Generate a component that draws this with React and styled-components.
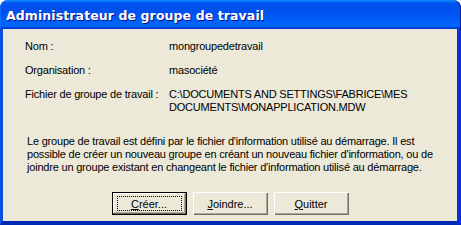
import styled, { createGlobalStyle } from "styled-components";

const Global = createGlobalStyle`
  html, body { margin: 0; padding: 0; background: #fff; }
  #root { width: 461px; height: 225px; }
`;

const Window = styled.div`
  width: 461px;
  height: 225px;
  display: flex;
  flex-direction: column;
  box-sizing: border-box;
  font-family: Tahoma, "Liberation Sans", sans-serif;
  font-size: 11px;
  letter-spacing: -0.2px;
  color: #000;
`;

const TitleBar = styled.div`
  height: 29px;
  flex: none;
  display: flex;
  align-items: center;
  padding: 0 6px;
  border-radius: 8px 8px 0 0;
  background: linear-gradient(
    180deg,
    #0997ff,
    #0053ee 10%,
    #0050ee 40%,
    #0066ff 86%,
    #0066ff 91%,
    #005bff 93%,
    #003dd7 95%,
    #003dd7
  );
  box-shadow: inset 1px 0 #0a6cff, inset -1px 0 #001ea0;
`;

const Title = styled.span`
  color: #fff;
  font-family: "DejaVu Sans", sans-serif;
  font-weight: bold;
  font-size: 12.5px;
  letter-spacing: 0.1px;
  text-shadow: 1px 1px #0f1089;
  margin-top: 1px;
`;

const Frame = styled.div`
  flex: 1;
  min-height: 0;
  display: flex;
  flex-direction: column;
  background: #ece9d8;
  border-style: solid;
  border-width: 0 4px 4px 3px;
  border-color: #0055ea;
  border-left-color: #0a4fe0;
  border-right-color: #0831d9;
  border-bottom-color: #0029b8;
  padding: 11px 0 0 22px;
`;

const Fields = styled.div`
  display: grid;
  grid-template-columns: 144px 1fr;
  row-gap: 11px;
  line-height: 13px;
`;

const Label = styled.div``;

const Value = styled.div`
  white-space: nowrap;
`;

const Info = styled.p`
  margin: 21px 0 0 2px;
  line-height: 13px;
  white-space: nowrap;
`;

const Buttons = styled.div`
  display: flex;
  justify-content: center;
  gap: 6px;
  margin: 18px 0 0 -22px;
`;

const Button = styled.button`
  width: 75px;
  height: 23px;
  box-sizing: border-box;
  padding: 0;
  font: inherit;
  color: #000;
  background: #ece9d8;
  border: none;
  box-shadow: ${(p) =>
    p.$default
      ? "inset 0 0 0 1px #000, inset 1px 1px #fff, inset -2px -2px #716f64, inset 2px 2px #fff, inset -3px -3px #aca899"
      : "inset 1px 1px #fff, inset -1px -1px #716f64, inset -2px -2px #aca899"};
  display: flex;
  align-items: center;
  justify-content: center;
`;

const Focus = styled.span`
  display: flex;
  align-items: center;
  justify-content: center;
  width: 65px;
  height: 15px;
  box-sizing: border-box;
  border: 1px dotted #000;
`;

const Key = styled.u`
  text-decoration: underline;
  text-underline-offset: 1px;
`;

export default function App() {
  return (
    <>
      <Global />
      <Window>
        <TitleBar>
          <Title>Administrateur de groupe de travail</Title>
        </TitleBar>
        <Frame>
          <Fields>
            <Label>Nom :</Label>
            <Value>mongroupedetravail</Value>
            <Label>Organisation :</Label>
            <Value>masociété</Value>
            <Label>Fichier de groupe de travail :</Label>
            <Value>
              C:\DOCUMENTS AND SETTINGS\FABRICE\MES
              <br />
              DOCUMENTS\MONAPPLICATION.MDW
            </Value>
          </Fields>
          <Info>
            Le groupe de travail est défini par le fichier d'information utilisé au démarrage. Il est
            <br />
            possible de créer un nouveau groupe en créant un nouveau fichier d'information, ou de
            <br />
            joindre un groupe existant en changeant le fichier d'information utilisé au démarrage.
          </Info>
          <Buttons>
            <Button $default>
              <Focus>
                <Key>C</Key>réer...
              </Focus>
            </Button>
            <Button>
              <span>
                <Key>J</Key>oindre...
              </span>
            </Button>
            <Button>
              <span>
                <Key>Q</Key>uitter
              </span>
            </Button>
          </Buttons>
        </Frame>
      </Window>
    </>
  );
}
